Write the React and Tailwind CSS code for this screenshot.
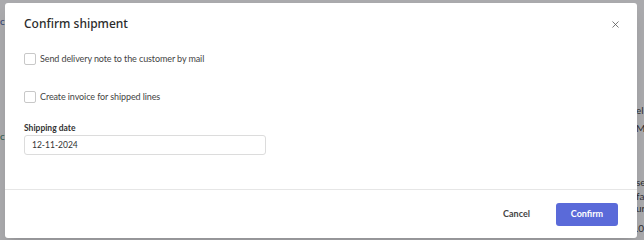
import { X } from "lucide-react";

const FONT = { fontFamily: 'Lato, "Noto Sans", Arial, sans-serif' };

function Checkbox({ label }) {
  return (
    <label className="flex h-[12px] items-center gap-[4px] text-[9px] tracking-[-0.1px] text-[#444]">
      <span className="h-[12px] w-[12px] rounded-[2px] border border-[#c8c8c8] bg-white" />
      {label}
    </label>
  );
}

function BackgroundPage() {
  // faint page behind the dialog, only its edges stay visible
  return (
    <div className="flex h-[240px] w-[644px] justify-between bg-white text-[10px] text-[#333]">
      <div className="flex w-[6px] flex-col overflow-hidden pt-[14px]">
        <span className="text-[#2b4a9a]">cs</span>
        <span className="mt-[100px] text-[#2c7a5a]">cr</span>
      </div>
      <div className="flex w-[8px] flex-col items-start overflow-hidden pt-[104px] leading-[12px]">
        <span>el</span>
        <span className="mt-[6px]">M</span>
        <span className="mt-[42px]">se</span>
        <span className="mt-[2px]">fa</span>
        <span>ur</span>
        <span className="mt-[8px]">.0</span>
      </div>
    </div>
  );
}

export default function App() {
  return (
    <div className="relative h-[240px] w-[644px] overflow-hidden" style={FONT}>
      <BackgroundPage />
      <div className="absolute inset-0 bg-[#2a2a33]/40">
        <div className="ml-[5px] mt-[3px] flex h-[235px] w-[632px] flex-col rounded-[3px] bg-white shadow-lg">
          <div className="flex h-[40px] items-center justify-between pl-[19px] pr-[16px] pt-[2px]">
            <h2
              className="text-[12px] font-medium text-[#2b2b2b]"
              style={{ fontFamily: '"Noto Sans", Lato, sans-serif' }}
            >
              Confirm shipment
            </h2>
            <X size={11} strokeWidth={1.7} className="text-[#555]" />
          </div>
          <div className="flex flex-1 flex-col px-[19px] pt-[10px]">
            <Checkbox label="Send delivery note to the customer by mail" />
            <div className="mt-[26px]">
              <Checkbox label="Create invoice for shipped lines" />
            </div>
            <div className="mt-[19px] text-[8.5px] font-bold leading-[12px] text-[#333]">Shipping date</div>
            <div className="mt-[1px] flex h-[20px] w-[242px] items-center rounded-[3px] border border-[#dcdcdc] px-[7px] text-[8.5px] text-[#333]">
              12-11-2024
            </div>
          </div>
          <div className="flex h-[49px] items-center justify-end gap-[26px] border-t border-[#e6e6e6] pr-[19px]">
            <button className="text-[9px] font-bold text-[#444]">Cancel</button>
            <button className="h-[23px] w-[62px] rounded-[3px] bg-[#5a6ad9] text-[9px] font-bold text-white">
              Confirm
            </button>
          </div>
        </div>
      </div>
    </div>
  );
}
